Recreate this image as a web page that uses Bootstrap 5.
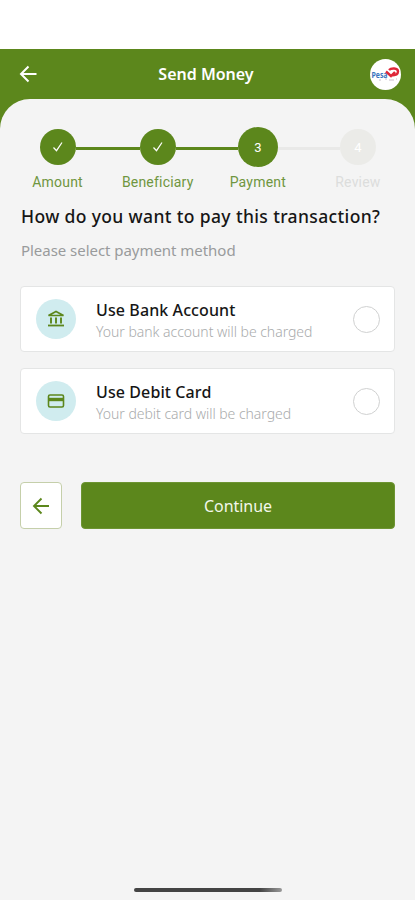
<!DOCTYPE html>
<html lang="en">
<head>
<meta charset="utf-8">
<meta name="viewport" content="width=device-width, initial-scale=1">
<title>Send Money</title>
<link href="https://cdn.jsdelivr.net/npm/bootstrap@5.3.0/dist/css/bootstrap.min.css" rel="stylesheet">
<style>
:root{--leaf:#5c871c}
body{font-family:"Noto Sans","Open Sans",sans-serif;background:#fff;height:900px;overflow:hidden}
.status-space{height:49px}
.app-shell{height:851px;background:var(--leaf)}
.app-head{height:50px;padding:0 14px 0 19px}
.app-title{font-size:16px;font-weight:600;line-height:24px;margin-right:3px}
.avatar{width:31px;height:31px}
.sheet{background:#f4f4f4;border-radius:30px 30px 0 0;padding-top:28px}
.steps{margin:0 7px 0 7.5px;height:76px}
.step{width:25%}
.dot-row{height:40px}
.rail{height:3px;background:var(--leaf);margin-top:3px}
.rail.off{background:#e9e9e8}
.rail.none{background:transparent}
.dot{width:36px;height:36px;background:var(--leaf);color:#fff;font:13px Roboto,sans-serif}
.dot.now{width:40px;height:40px}
.dot.off{background:#ebebe8}
.step-name{font:14px/20px Roboto,sans-serif;letter-spacing:.2px;color:#6f9640;margin-top:5px}
.step-name.off{color:#dcdddc}
.content{padding:0 20px}
.question{font-size:17.5px;font-weight:500;line-height:24px;letter-spacing:.36px;color:#161616;margin:1px 0 0 1px;white-space:nowrap}
.hint{font-size:15px;line-height:22px;letter-spacing:-.04px;color:#999b9c;margin:11px 0 25px 1px}
.method{height:66px;border:1px solid #e4e5e5;border-radius:4px;padding:0 14px 0 15px;margin-bottom:16px}
.method-icon{width:40px;height:40px;background:#d0ecef;margin-right:20px}
.method-copy{padding-top:3px}
.method-name{font-size:16px;font-weight:500;line-height:22px;letter-spacing:.1px;color:#161616}
.method-note{font-size:14px;font-weight:300;line-height:22px;letter-spacing:-.03px;color:#a9abac}
.pick{width:27px;height:27px;border:1.5px solid #d0d1d1;margin:0}
.actions{margin-top:48px;gap:19px}
.btn-back{width:42px;height:47px;background:#fff;border:1px solid #c5cfaa;border-radius:4px}
.btn-go{height:47px;background:var(--leaf);color:#f3f7ea;border-radius:4px;border:1px solid #6d9432;font-size:16px;line-height:24px;letter-spacing:-.05px}
.home-bar{width:148px;height:4px;margin-bottom:8px;background:linear-gradient(90deg,#444 85%,#999)}
</style>
<script src="https://cdn.jsdelivr.net/npm/bootstrap@5.3.0/dist/js/bootstrap.bundle.min.js"></script>
</head>
<body>
<div class="status-space"></div>
<div class="app-shell d-flex flex-column">
  <header class="app-head d-flex align-items-center justify-content-between text-white">
    <svg width="26" height="20" viewBox="0 0 26 20" fill="none" stroke="#fff" stroke-width="2"><path d="M17.500 10H2M9.500 2.500L2 10L9.500 17.500"/></svg>
    <div class="app-title">Send Money</div>
    <svg class="avatar" viewBox="0 0 31 31"><circle cx="15.500" cy="15.500" r="15.500" fill="#fff"/><text x="1.500" y="18.500" font-family="Open Sans, sans-serif" font-size="8" font-weight="700" fill="#3974bd" textLength="16" lengthAdjust="spacingAndGlyphs">Pesa</text><path d="M16 12.500l5 4.500 4-4M19 11c2-2 9-2.500 9 1.500 0 3-3 4-7 4" fill="none" stroke="#df2638" stroke-width="2.400"/><path d="M9 21h2m4-1h2m2 1h5m2-1h1" stroke="#c9bdcb" stroke-width="1"/></svg>
  </header>
  <main class="sheet flex-grow-1 d-flex flex-column">
    <div class="steps d-flex text-center">
      <div class="step"><div class="dot-row d-flex align-items-center"><div class="rail none flex-fill"></div><div class="dot rounded-circle d-flex align-items-center justify-content-center"><svg width="12" height="12" viewBox="0 0 12 12" fill="none" stroke="#fff" stroke-width="1.200"><path d="M1.500 6.500L4.500 9.700L10 1.500"/></svg></div><div class="rail flex-fill"></div></div><div class="step-name">Amount</div></div>
      <div class="step"><div class="dot-row d-flex align-items-center"><div class="rail flex-fill"></div><div class="dot rounded-circle d-flex align-items-center justify-content-center"><svg width="12" height="12" viewBox="0 0 12 12" fill="none" stroke="#fff" stroke-width="1.200"><path d="M1.500 6.500L4.500 9.700L10 1.500"/></svg></div><div class="rail flex-fill"></div></div><div class="step-name">Beneficiary</div></div>
      <div class="step"><div class="dot-row d-flex align-items-center"><div class="rail flex-fill"></div><div class="dot now rounded-circle d-flex align-items-center justify-content-center">3</div><div class="rail off flex-fill"></div></div><div class="step-name">Payment</div></div>
      <div class="step"><div class="dot-row d-flex align-items-center"><div class="rail off flex-fill"></div><div class="dot off rounded-circle d-flex align-items-center justify-content-center">4</div><div class="rail none flex-fill"></div></div><div class="step-name off">Review</div></div>
    </div>
    <div class="content">
      <h1 class="question">How do you want to pay this transaction?</h1>
      <p class="hint">Please select payment method</p>
      <label class="method bg-white d-flex align-items-center">
        <span class="method-icon rounded-circle d-flex align-items-center justify-content-center"><svg width="18" height="18" viewBox="0 0 18 18" fill="none" stroke="#5c871c"><path d="M1.500 5.500L9 1.500L16.500 5.500z" stroke-width="1.700"/><path d="M4 7.500v6M9 7.500v6M14 7.500v6" stroke-width="1.900"/><path d="M1 15.500h16" stroke-width="1.800"/></svg></span>
        <span class="method-copy flex-grow-1"><span class="method-name d-block">Use Bank Account</span><span class="method-note d-block">Your bank account will be charged</span></span>
        <input class="form-check-input pick" type="radio" name="method">
      </label>
      <label class="method bg-white d-flex align-items-center">
        <span class="method-icon rounded-circle d-flex align-items-center justify-content-center"><svg width="18" height="16" viewBox="0 0 18 16" fill="none" stroke="#5c871c"><rect x="1.500" y="2" width="15" height="12" rx="1.500" stroke-width="1.600"/><path d="M1.500 6.500h15" stroke-width="3.400"/></svg></span>
        <span class="method-copy flex-grow-1"><span class="method-name d-block">Use Debit Card</span><span class="method-note d-block">Your debit card will be charged</span></span>
        <input class="form-check-input pick" type="radio" name="method">
      </label>
      <div class="actions d-flex">
        <button class="btn btn-back p-0 d-flex align-items-center justify-content-center" aria-label="Back"><svg width="18" height="18" viewBox="0 0 18 18" fill="none" stroke="#5c871c" stroke-width="1.900"><path d="M17 9H2M9.500 1.500L2 9L9.500 16.500"/></svg></button>
        <button class="btn btn-go flex-grow-1 p-0">Continue</button>
      </div>
    </div>
    <div class="home-bar rounded-pill mx-auto mt-auto"></div>
  </main>
</div>
</body>
</html>
